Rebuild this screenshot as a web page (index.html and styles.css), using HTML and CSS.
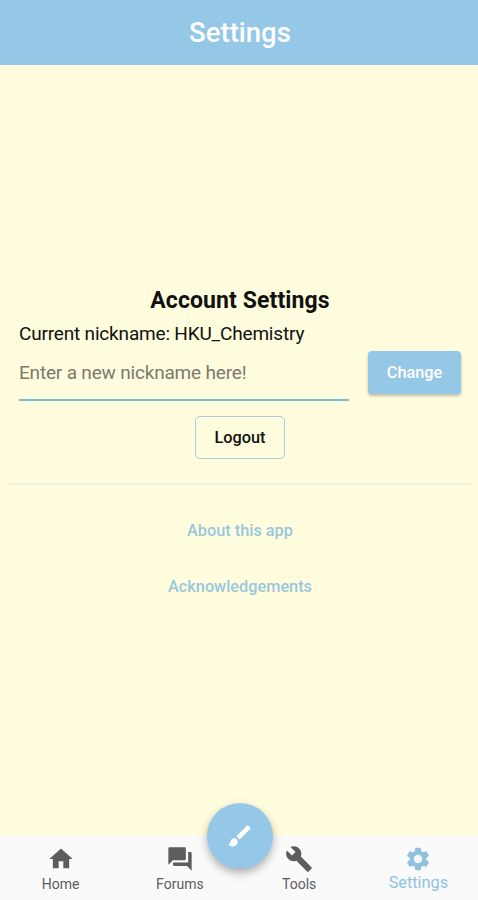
FILE: index.html
```html
<!DOCTYPE html>
<html lang="en">
<head>
    <meta charset="UTF-8">
    <meta name="viewport" content="width=device-width, initial-scale=1.0">
    <title>Settings</title>
    <link rel="stylesheet" href="styles.css">
</head>
<body>

    <header class="app-bar">
        <h1>Settings</h1>
    </header>

    <main class="content">
        <h2>Account Settings</h2>
        <p class="nickname">Current nickname: HKU_Chemistry</p>

        <form class="nickname-form">
            <input type="text" placeholder="Enter a new nickname here!">
            <button type="button" class="btn-change">Change</button>
        </form>

        <button class="btn-logout">Logout</button>

        <hr>

        <a class="about-link">About this app</a>
        <a class="ack-link">Acknowledgements</a>
    </main>

    <!-- Bottom navigation -->
    <nav class="bottom-nav">
        <a class="nav-item">
            <svg viewBox="0 0 24 24"><path d="M10 20v-6h4v6h5v-8h3L12 3 2 12h3v8z"/></svg>
            <span>Home</span>
        </a>
        <a class="nav-item">
            <svg viewBox="0 0 24 24"><path d="M21 6h-2v9H6v2c0 .55.45 1 1 1h11l4 4V7c0-.55-.45-1-1-1zm-4 6V3c0-.55-.45-1-1-1H3c-.55 0-1 .45-1 1v14l4-4h10c.55 0 1-.45 1-1z"/></svg>
            <span>Forums</span>
        </a>
        <a class="nav-item">
            <svg viewBox="0 0 24 24"><path d="M22.7 19l-9.1-9.1c.9-2.3.4-5-1.5-6.9-2-2-5-2.4-7.4-1.3L9 6 6 9 1.6 4.7C.4 7.1.9 10.1 2.9 12.1c1.9 1.9 4.6 2.4 6.9 1.5l9.1 9.1c.4.4 1 .4 1.4 0l2.3-2.3c.5-.4.5-1.1.1-1.4z"/></svg>
            <span>Tools</span>
        </a>
        <a class="nav-item active">
            <svg viewBox="0 0 24 24"><path d="M19.14 12.94c.04-.3.06-.61.06-.94 0-.32-.02-.64-.07-.94l2.03-1.58c.18-.14.23-.41.12-.61l-1.92-3.32c-.12-.22-.37-.29-.59-.22l-2.39.96c-.5-.38-1.03-.7-1.62-.94l-.36-2.54c-.04-.24-.24-.41-.48-.41h-3.84c-.24 0-.43.17-.47.41l-.36 2.54c-.59.24-1.13.57-1.62.94l-2.39-.96c-.22-.08-.47 0-.59.22L2.74 8.87c-.12.21-.08.47.12.61l2.03 1.58c-.05.3-.09.63-.09.94s.02.64.07.94l-2.03 1.58c-.18.14-.23.41-.12.61l1.92 3.32c.12.22.37.29.59.22l2.39-.96c.5.38 1.03.7 1.62.94l.36 2.54c.05.24.24.41.48.41h3.84c.24 0 .44-.17.47-.41l.36-2.54c.59-.24 1.13-.56 1.62-.94l2.39.96c.22.08.47 0 .59-.22l1.92-3.32c.12-.22.07-.47-.12-.61l-2.01-1.58zM12 15.6c-1.98 0-3.6-1.62-3.6-3.6s1.62-3.6 3.6-3.6 3.6 1.62 3.6 3.6-1.62 3.6-3.6 3.6z"/></svg>
            <span>Settings</span>
        </a>
        <button class="fab" aria-label="Draw">
            <svg viewBox="0 0 24 24"><path d="M7 14c-1.66 0-3 1.34-3 3 0 1.31-1.16 2-2 2 .92 1.22 2.49 2 4 2 2.21 0 4-1.79 4-4 0-1.66-1.34-3-3-3zm13.71-9.37l-1.34-1.34c-.39-.39-1.02-.39-1.41 0L9 12.25 11.75 15l8.96-8.96c.39-.39.39-1.02 0-1.41z"/></svg>
        </button>
    </nav>

</body>
</html>
```
FILE: styles.css
```css
* { box-sizing: border-box; }
body {
    display: flex;
    flex-direction: column;
    height: 100vh;
    margin: 0;
    background-color: #fffddd;
    color: #111;
    font-family: Roboto, sans-serif;
}
button { font-family: inherit; font-weight: 500; cursor: pointer; }
.app-bar {
    height: 65px;
    padding-left: 2px;
    background-color: #95c8e7;
    color: white;
    text-align: center;
}
.app-bar h1 { margin: 0; font-size: 27.5px; font-weight: 500; line-height: 66px; }
.content {
    flex: 1;
    display: flex;
    flex-direction: column;
    align-items: center;
    padding: 221px 7px 0 9px;
}
h2 { margin: 0; font-size: 23px; font-weight: 700; line-height: 30px; letter-spacing: 0.1px; }
.nickname {
    align-self: stretch;
    margin: 3px 10px 0;
    font-size: 19px;
    line-height: 30px;
    letter-spacing: -0.18px;
}
.nickname-form {
    display: flex;
    align-self: stretch;
    gap: 19px;
    margin: 1px 10px 0;
}
input {
    flex: 1;
    min-width: 0;
    height: 51px;
    padding: 0 0 5px;
    border: none;
    border-bottom: 2px solid #7db8d9;
    background: none;
    font-family: inherit;
    font-size: 19px;
    letter-spacing: -0.18px;
}
input::placeholder { color: #7b7a6c; }
.btn-change {
    width: 93px;
    height: 43px;
    margin-top: 1px;
    padding: 0;
    border: none;
    border-radius: 4px;
    background-color: #95c8e7;
    box-shadow: 0 2px 3px rgba(0, 0, 0, 0.25);
    color: white;
    font-size: 16.3px;
}
.btn-logout {
    width: 90px;
    height: 43px;
    margin-top: 15px;
    padding: 0;
    border: 1px solid #a9cddb;
    border-radius: 5px;
    background: none;
    color: #111;
    font-size: 16.3px;
}
hr {
    width: 100%;
    margin: 24px 0 0;
    border: none;
    border-top: 2px solid #edf4df;
}
.about-link, .ack-link { color: #98c7df; font-size: 16.3px; font-weight: 500; line-height: 20px; }
.about-link { margin-top: 36px; }
.ack-link { margin-top: 36px; }
.bottom-nav {
    position: relative;
    display: flex;
    height: 64px;
    padding-left: 1px;
    background-color: #fafafa;
    color: #5d5d5d;
}
.nav-item {
    flex: 1;
    display: flex;
    flex-direction: column;
    align-items: center;
    padding-top: 9px;
    font-size: 14px;
    line-height: 22px;
}
.nav-item svg { width: 28px; height: 28px; fill: currentColor; }
.nav-item.active { color: #8fc2df; font-size: 16.3px; line-height: 20px; }
/* Floating button over the nav bar */
.fab {
    position: absolute;
    top: -33px;
    left: calc(50% - 32px);
    display: flex;
    align-items: center;
    justify-content: center;
    width: 66px;
    height: 66px;
    padding: 0;
    border: none;
    border-radius: 50%;
    background-color: #95c8e7;
    box-shadow: 0 4px 8px rgba(0, 0, 0, 0.3);
}
.fab svg { width: 28px; height: 28px; fill: white; }
```
